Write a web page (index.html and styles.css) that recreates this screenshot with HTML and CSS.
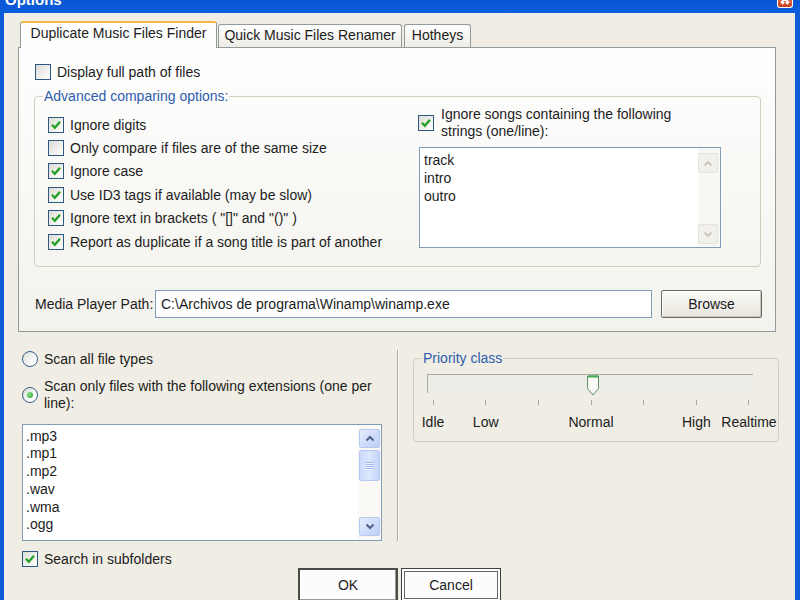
FILE: index.html
```html
<!DOCTYPE html>
<html>
<head>
<meta charset="utf-8">
<title>Options</title>
<link rel="stylesheet" href="styles.css">
</head>
<body>
<div class="window">
  <div class="titlebar">
    <span class="title">Options</span>
    <span class="close"><svg width="14" height="8" viewBox="0 0 14 8"><path d="M3 -4 L11 4 M11 -4 L3 4 M4 5 L6 3 M10 5 L8 3" stroke="#fff" stroke-width="2" fill="none"/></svg></span>
  </div>
  <div class="client">
    <div class="tabs">
      <div class="tab active">Duplicate Music Files Finder</div>
      <div class="tab t2">Quick Music Files Renamer</div>
      <div class="tab t3">Hotheys</div>
    </div>
    <div class="panel">
      <div class="row display-row"><span class="cb"></span><span>Display full path of files</span></div>
      <fieldset class="group adv">
        <legend>Advanced comparing options:</legend>
        <div class="adv-grid">
          <div class="adv-left">
            <div class="row crow"><span class="cb"><svg width="14" height="14" viewBox="0 0 14 14"><path d="M3 6.8 L5.8 9.8 L11 3.8" fill="none" stroke="#21A121" stroke-width="2.3"/></svg></span><span>Ignore digits</span></div>
            <div class="row crow"><span class="cb"></span><span>Only compare if files are of the same size</span></div>
            <div class="row crow"><span class="cb"><svg width="14" height="14" viewBox="0 0 14 14"><path d="M3 6.8 L5.8 9.8 L11 3.8" fill="none" stroke="#21A121" stroke-width="2.3"/></svg></span><span>Ignore case</span></div>
            <div class="row crow"><span class="cb"><svg width="14" height="14" viewBox="0 0 14 14"><path d="M3 6.8 L5.8 9.8 L11 3.8" fill="none" stroke="#21A121" stroke-width="2.3"/></svg></span><span>Use ID3 tags if available (may be slow)</span></div>
            <div class="row crow"><span class="cb"><svg width="14" height="14" viewBox="0 0 14 14"><path d="M3 6.8 L5.8 9.8 L11 3.8" fill="none" stroke="#21A121" stroke-width="2.3"/></svg></span><span>Ignore text in brackets ( "[]" and "()" )</span></div>
            <div class="row crow"><span class="cb"><svg width="14" height="14" viewBox="0 0 14 14"><path d="M3 6.8 L5.8 9.8 L11 3.8" fill="none" stroke="#21A121" stroke-width="2.3"/></svg></span><span>Report as duplicate if a song title is part of another</span></div>
          </div>
          <div class="adv-right">
            <div class="row ignore-row"><span class="cb"><svg width="14" height="14" viewBox="0 0 14 14"><path d="M3 6.8 L5.8 9.8 L11 3.8" fill="none" stroke="#21A121" stroke-width="2.3"/></svg></span><span class="twoline">Ignore songs containing the following<br>strings (one/line):</span></div>
            <div class="listbox strings">
              <div class="items strings-items">track<br>intro<br>outro</div>
              <div class="vscroll off">
                <span class="sbtn up"><svg width="10" height="7" viewBox="0 0 10 7"><path d="M1.5 5.5 L5 2 L8.5 5.5" fill="none" stroke="#C8C6BA" stroke-width="1.8"/></svg></span>
                <span class="sbtn down"><svg width="10" height="7" viewBox="0 0 10 7"><path d="M1.5 1.5 L5 5 L8.5 1.5" fill="none" stroke="#C8C6BA" stroke-width="1.8"/></svg></span>
              </div>
            </div>
          </div>
        </div>
      </fieldset>
      <div class="media-row">
        <span class="media-label">Media Player Path:</span>
        <span class="input">C:\Archivos de programa\Winamp\winamp.exe</span>
        <span class="browse">Browse</span>
      </div>
    </div>
    <div class="lower">
      <div class="lower-left">
        <div class="row radio-row"><span class="radio"></span><span>Scan all file types</span></div>
        <div class="row radio-row2"><span class="radio on"></span><span class="twoline">Scan only files with the following extensions (one per<br>line):</span></div>
        <div class="listbox ext">
          <div class="items ext-items">.mp3<br>.mp1<br>.mp2<br>.wav<br>.wma<br>.ogg</div>
          <div class="vscroll on">
            <span class="sbtn up"><svg width="10" height="7" viewBox="0 0 10 7"><path d="M1.5 5.5 L5 2 L8.5 5.5" fill="none" stroke="#4D6185" stroke-width="2"/></svg></span>
            <span class="thumb"><span class="grip"></span><span class="grip"></span><span class="grip"></span><span class="grip"></span></span>
            <span class="sbtn down"><svg width="10" height="7" viewBox="0 0 10 7"><path d="M1.5 1.5 L5 5 L8.5 1.5" fill="none" stroke="#4D6185" stroke-width="2"/></svg></span>
          </div>
        </div>
        <div class="row search-row"><span class="cb"><svg width="14" height="14" viewBox="0 0 14 14"><path d="M3 6.8 L5.8 9.8 L11 3.8" fill="none" stroke="#21A121" stroke-width="2.3"/></svg></span><span>Search in subfolders</span></div>
      </div>
      <div class="sep"></div>
      <fieldset class="group priority">
        <legend>Priority class</legend>
        <div class="track">
          <svg class="knob" width="12" height="21" viewBox="0 0 12 21"><path d="M0.5 1 H11.5 V13.5 L6 20 L0.5 13.5 Z" fill="#F8F8F5" stroke="#5E8E68" stroke-width="1"/><rect x="1" y="0.5" width="10" height="2" fill="#3FAE4C"/></svg>
        </div>
        <div class="ticks"><span></span><span></span><span></span><span></span><span></span><span></span><span></span></div>
        <div class="tlabels"><span>Idle</span><span>Low</span><span></span><span>Normal</span><span></span><span>High</span><span>Realtime</span></div>
      </fieldset>
    </div>
    <div class="buttons">
      <span class="btn ok">OK</span>
      <span class="btn cancel">Cancel</span>
    </div>
  </div>
</div>
</body>
</html>
```

FILE: styles.css
```css
* { box-sizing: border-box; }
html, body { margin: 0; padding: 0; }
body {
  width: 800px;
  height: 600px;
  overflow: hidden;
  font-family: "Liberation Sans", Arial, sans-serif;
  font-size: 14px;
  color: #1c1c1c;
  background: #0E5BD8;
}
.window {
  width: 800px;
  height: 600px;
  display: flex;
  flex-direction: column;
  background: #0E5BD8;
}
.titlebar {
  height: 13px;
  flex: none;
  display: flex;
  justify-content: space-between;
  overflow: hidden;
  background: linear-gradient(#0A57D4, #0C5EDD);
  padding: 0 7px 0 5px;
}
.title {
  color: #fff;
  font-weight: bold;
  font-size: 15px;
  line-height: 15px;
  margin-top: -8px;
}
.close {
  width: 16px;
  height: 9px;
  margin-top: -1px;
  background: linear-gradient(#E06A48, #C8401E);
  border: 1px solid #fff;
  border-top: none;
  border-radius: 0 0 3px 3px;
  display: flex;
  justify-content: center;
}
.client {
  flex: 1;
  margin: 0 5px 0 4px;
  background: #EFEDE4;
  display: flex;
  flex-direction: column;
}
.tabs {
  display: flex;
  align-items: flex-end;
  height: 35px;
  margin: 0 0 -1px 16px;
  position: relative;
  z-index: 1;
}
.tab {
  height: 23px;
  margin-bottom: 1px;
  border: 1px solid #919B9C;
  border-bottom: none;
  border-radius: 3px 3px 0 0;
  background: linear-gradient(#FFFFFF, #EDECE6);
  display: flex;
  align-items: center;
  justify-content: center;
  padding-bottom: 2px;
  white-space: nowrap;
}
.tab.active {
  width: 197px;
  height: 27px;
  margin-bottom: 0;
  background: #FEFEFE;
  border-top: 2px solid #F5B940;
  border-bottom: none;
  padding-bottom: 5px;
}
.tab.t2 { width: 184px; margin-left: 1px; }
.tab.t3 { width: 67px; margin-left: 2px; }
.panel {
  margin-left: 14px;
  width: 758px;
  height: 285px;
  flex: none;
  border: 1px solid #919B9C;
  background: linear-gradient(#FEFEFE, #F3F2EC);
  display: flex;
  flex-direction: column;
}
.row {
  display: flex;
  align-items: center;
  gap: 6px;
  white-space: nowrap;
}
.cb {
  width: 16px;
  height: 16px;
  flex: none;
  border: 1px solid #2E5782;
  background: linear-gradient(135deg, #DCDCD6 0%, #F3F3F0 65%, #FFFFFF 100%);
  display: flex;
  align-items: center;
  justify-content: center;
}
.display-row {
  height: 18px;
  margin: 15px 0 0 16px;
}
.group {
  margin: 0;
  border: 1px solid #D0D0BF;
  border-radius: 4px;
  padding: 0;
}
.group legend {
  padding: 0 1px;
  margin-left: 8px;
  line-height: 17px;
  color: #2E5DAF;
}
.adv {
  margin: 7px 0 0 15px;
  width: 727px;
  padding: 1px 0 13px 0;
}
.adv-grid {
  display: grid;
  grid-template-columns: 370px 302px;
  padding-left: 13px;
}
.adv-left { margin-top: 7px; }
.crow { height: 23.4px; }
.ignore-row { gap: 7px; }
.twoline { line-height: 17px; }
.listbox {
  display: flex;
  border: 1px solid #7F9DB9;
  background: #fff;
}
.items { flex: 1; }
.strings {
  margin: 7px 0 0 1px;
  width: 302px;
  height: 101px;
}
.strings-items {
  padding: 3px 0 0 4px;
  line-height: 18px;
}
.vscroll {
  display: flex;
  flex-direction: column;
  justify-content: space-between;
}
.vscroll.off {
  width: 22px;
  padding: 5px 2px 3px 0;
  background: #F7F7F3;
}
.sbtn {
  height: 20px;
  display: flex;
  align-items: center;
  justify-content: center;
  border-radius: 2px;
}
.vscroll.off .sbtn {
  background: #F1F0EA;
  border: 1px solid #E6E4DA;
}
.vscroll.on {
  width: 23px;
  padding: 4px 1px 4px 1px;
  background: #FAF9F5;
  justify-content: flex-start;
}
.vscroll.on .sbtn {
  height: 19px;
  background: linear-gradient(135deg, #E4ECFE, #BCCFF8);
  border: 1px solid #B8CAF2;
}
.vscroll.on .down { margin-top: auto; }
.thumb {
  margin-top: 2px;
  height: 31px;
  border: 1px solid #B8CAF2;
  border-radius: 2px;
  background: linear-gradient(90deg, #CCDAFB, #DCE6FE 50%, #C4D4FA);
  display: flex;
  flex-direction: column;
  align-items: center;
  justify-content: center;
  gap: 1px;
}
.grip {
  width: 8px;
  height: 1px;
  background: #A4B9EE;
  box-shadow: 0 1px 0 #EEF4FE;
}
.media-row {
  display: flex;
  align-items: center;
  height: 28px;
  margin: 23px 0 0 16px;
  white-space: nowrap;
}
.media-label { width: 120px; }
.input {
  width: 497px;
  height: 28px;
  border: 1px solid #7F9DB9;
  background: #fff;
  padding-left: 5px;
  display: flex;
  align-items: center;
}
.browse {
  width: 101px;
  height: 28px;
  margin-left: 9px;
  border: 1px solid #6B6B66;
  border-radius: 2px;
  background: linear-gradient(#FAFAF7, #E7E5DB);
  box-shadow: inset 1px 1px 0 #fff, inset -1px -1px 0 #C9C6BA;
  display: flex;
  align-items: center;
  justify-content: center;
}
.lower {
  display: flex;
  height: 236px;
  flex: none;
}
.lower-left {
  margin-left: 18px;
  width: 360px;
  display: flex;
  flex-direction: column;
}
.radio {
  width: 16px;
  height: 16px;
  flex: none;
  border-radius: 50%;
  border: 1px solid #3A5F88;
  background: linear-gradient(135deg, #DADAD3, #FFFFFF 75%);
  display: flex;
  align-items: center;
  justify-content: center;
}
.radio.on::after {
  content: "";
  width: 6px;
  height: 6px;
  border-radius: 50%;
  background: radial-gradient(circle at 35% 35%, #8EE08A, #21A121);
}
.radio-row { height: 18px; margin-top: 18px; }
.radio-row2 { margin-top: 10px; }
.ext {
  margin-top: 12px;
  height: 119px;
  width: 360px;
}
.ext-items {
  padding: 3px 0 0 3px;
  line-height: 17.7px;
}
.search-row { height: 18px; margin-top: 9px; }
.sep {
  margin: 18px 0 0 15px;
  width: 2px;
  height: 191px;
  border-left: 1px solid #ACA899;
  border-right: 1px solid #FFFFFF;
}
.priority {
  margin: 17.5px 0 0 14px;
  width: 366px;
  align-self: flex-start;
  padding: 0 0 10px 0;
}
.track {
  position: relative;
  margin: 7.5px 0 0 13px;
  width: 326px;
  height: 19px;
  background: #EDEDE8;
  border-top: 1px solid #A9A99F;
  border-left: 1px solid #A9A99F;
}
.knob {
  position: absolute;
  left: 159px;
  top: 0;
}
.ticks, .tlabels {
  display: grid;
  grid-template-columns: repeat(7, 52.67px);
  margin-left: -7.3px;
}
.ticks {
  margin-top: 7px;
  height: 5px;
}
.ticks span {
  width: 1px;
  height: 5px;
  background: #A8A79B;
  justify-self: center;
}
.tlabels {
  margin-top: 8.5px;
  line-height: 17px;
}
.tlabels span {
  text-align: center;
  white-space: nowrap;
  justify-self: center;
}
.buttons {
  display: flex;
  justify-content: center;
  gap: 3px;
}
.btn {
  width: 100px;
  height: 34px;
  background: #FCFCFC;
  border: 1px solid #3F3F3F;
  display: flex;
  align-items: center;
  justify-content: center;
}
.ok {
  border: 2px solid #4A4A4A;
  box-shadow: inset -1px -1px 0 #9A9A9A;
}
.cancel {
  box-shadow: inset 0 0 0 2px #FFFFFF, inset 0 0 0 3px #666666;
}
```
